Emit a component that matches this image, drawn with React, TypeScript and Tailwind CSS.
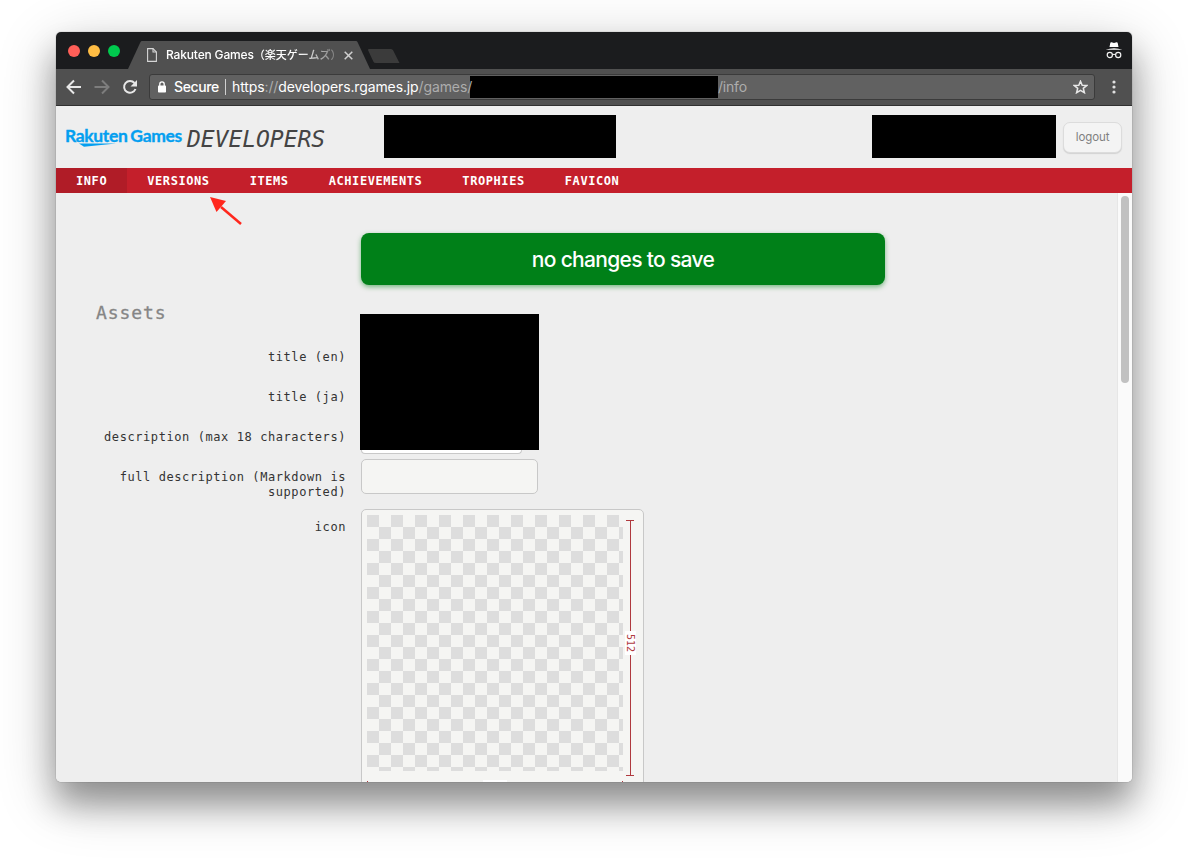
import React from "react";

const mono = "font-['DejaVu_Sans_Mono',monospace]";

const tabs = ["INFO", "VERSIONS", "ITEMS", "ACHIEVEMENTS", "TROPHIES", "FAVICON"];

function TabStrip() {
  return (
    <div className="relative flex h-[37px] shrink-0 bg-[#1b1c1e]">
      <div className="flex w-[72px] items-center gap-2 pl-3">
        <i className="size-3 rounded-full bg-[#ff5f58]" />
        <i className="size-3 rounded-full bg-[#ffbd44]" />
        <i className="size-3 rounded-full bg-[#00ca4e]" />
      </div>
      <svg className="absolute left-[72px] top-0" width="275" height="37" viewBox="0 0 275 37">
        <path d="M0 37L12.5 10Q13 9 14 9H228Q229 9 229.5 10L242 37Z" fill="#505050" />
        <path d="M240.500 17H263Q264.500 17 265.200 18.500L271.500 31H248Q246 31 245.300 29.500L240 18Z" fill="#3b3b3b" />
      </svg>
      <div className="relative flex w-[232px] items-center pt-[9px] pl-[19px]">
        <svg width="10" height="14" viewBox="0 0 10 14" fill="none" stroke="#d6d6d6" strokeWidth="1.100">
          <path d="M.6.6H6L9.400 4V13.400H.6Z" />
          <path d="M6 .6V4H9.400" />
        </svg>
        <span className="ml-[9px] w-[177px] shrink-0 whitespace-nowrap font-[Inter,'Noto_Sans_CJK_JP',sans-serif] text-[12px] font-medium leading-4 tracking-[-0.160px] text-white [mask-image:linear-gradient(to_right,#000_132px,rgba(0,0,0,0.25)_170px,transparent_176px)]">
          Rakuten Games<span className="text-[11px] tracking-normal">（楽天ゲームズ）</span>
        </span>
        <svg className="ml-[1px] shrink-0" width="9" height="9" viewBox="0 0 9 9" stroke="#d0d0d0" strokeWidth="1.500">
          <path d="M.7.7L8.300 8.300M8.300.7L.7 8.300" />
        </svg>
      </div>
      <svg className="ml-auto mr-[9px] mt-[10px]" width="18" height="17" viewBox="0 0 18 17">
        <path d="M5.300 1Q5.500 0 6.500.2L9 1L11.500.2Q12.500 0 12.700 1L13.500 5H4.500Z" fill="#fff" />
        <path d="M.5 7.800Q9 4.800 17.500 7.800Z" fill="#fff" />
        <g fill="none" stroke="#f2f2f2" strokeWidth="1.200">
          <circle cx="4.800" cy="13" r="2.600" />
          <circle cx="13.200" cy="13" r="2.600" />
          <path d="M7.400 12.800Q9 11.700 10.600 12.800" />
        </g>
      </svg>
    </div>
  );
}

function Toolbar() {
  return (
    <div className="flex h-[37px] shrink-0 items-center border-b border-[#303030] bg-[#505050] pl-[10px]">
      <svg width="74" height="16" viewBox="0 0 74 16" fill="none" strokeWidth="2">
        <path d="M15 8H2M8 1.500L1.500 8L8 14.500" stroke="#e8e8e8" />
        <path d="M28.500 8H42M36 1.500L42.500 8L36 14.500" stroke="#7d7d7d" />
        <path d="M68.500 4A5.900 5.900 0 1 0 69.500 10" stroke="#e8e8e8" />
        <path d="M71 1V7.500H64.500Z" fill="#e8e8e8" />
      </svg>
      <div className="ml-[9px] flex h-[26px] w-[946px] items-center rounded-[3px] border border-[#3b3b3b] bg-[#616161] pl-2 font-[Inter,sans-serif] text-[14px]">
        <svg width="8" height="12" viewBox="0 0 8 12">
          <rect y="4.500" width="8" height="7" rx=".8" fill="#fff" />
          <path d="M1.800 5V3A2.200 2.200 0 0 1 6.200 3V5" fill="none" stroke="#fff" strokeWidth="1.300" />
        </svg>
        <span className="ml-[8px] w-[51px] -translate-y-px whitespace-nowrap font-medium tracking-[-0.400px] text-white">Secure</span>
        <i className="h-4 w-px bg-[#d0d0d0]" />
        <span className="ml-[6px] w-[238px] -translate-y-px whitespace-nowrap tracking-[-0.120px] text-[#adadad]">
          <span className="text-white">https</span>://<span className="text-white">developers.rgames.jp</span>/games/
        </span>
        <i className="h-[22px] w-[248px] shrink-0 bg-black" />
        <span className="-translate-y-px tracking-[-0.200px] text-[#adadad]">/info</span>
        <svg className="ml-auto mr-[6px]" width="15" height="14" viewBox="0 0 15 14" fill="none" stroke="#e8e8e8" strokeWidth="1.500">
          <path d="M7.500 1.200L9.200 5.200L13.700 5.500L10.300 8.300L11.400 12.700L7.500 10.300L3.600 12.700L4.700 8.300L1.300 5.500L5.800 5.200Z" />
        </svg>
      </div>
      <svg className="ml-[17px]" width="4" height="14" viewBox="0 0 4 14" fill="#e0e0e0">
        <circle cx="2" cy="2" r="1.600" />
        <circle cx="2" cy="7" r="1.600" />
        <circle cx="2" cy="12" r="1.600" />
      </svg>
    </div>
  );
}

function SiteHeader() {
  return (
    <header className="flex h-[62px] shrink-0 items-start">
      <div className="ml-[9px] mt-[18px] w-[122px] shrink-0">
        <div className="whitespace-nowrap font-[Lato,sans-serif] text-[17.500px] font-bold leading-[23px] tracking-[-0.350px] text-[#049ff0] [-webkit-text-stroke:0.350px_#049ff0] [word-spacing:-1px]">
          Rakuten Games
        </div>
        <svg className="-mt-[4px] ml-[14px] block" width="38" height="4" viewBox="0 0 38 4">
          <path d="M0 .5H37L5 3.800Z" fill="#049ff0" />
        </svg>
      </div>
      <div className={`${mono} mt-[19px] w-[197px] shrink-0 text-[23px] italic leading-[28px] tracking-[-0.040px] text-[#444]`}>
        DEVELOPERS
      </div>
      <div className="mt-[9px] h-[43px] w-[232px] bg-black" />
      <div className="ml-auto mt-[9px] h-[43px] w-[184px] bg-black" />
      <button className="ml-[7px] mr-[10px] mt-4 h-[31px] w-[59px] rounded-[7px] border border-[#dcdcdc] bg-[#f4f4f4] font-[Inter,sans-serif] text-[11.500px] tracking-[-0.100px] text-[#808080] shadow-[0_1px_1px_#d2d2d2]">
        logout
      </button>
    </header>
  );
}

function Label({ children, height }: { children: React.ReactNode; height: string }) {
  return (
    <div className={`${mono} ${height} w-[290px] text-right text-[12px] leading-[15px] tracking-[0.580px] text-[#333]`}>
      {children}
    </div>
  );
}

export default function App() {
  return (
    <div className="h-[862px] overflow-hidden bg-white pl-14 pt-8">
      <div className="relative flex h-[750px] w-[1076px] flex-col rounded-[5px] shadow-[0_0_1px_rgba(0,0,0,0.6),0_22px_32px_rgba(0,0,0,0.32),0_16px_60px_rgba(0,0,0,0.24)]">
        <div className="flex h-full flex-col overflow-hidden rounded-[5px] bg-[#eeeeee]">
          <TabStrip />
          <Toolbar />
          <SiteHeader />
          <nav className="flex h-[25px] shrink-0 bg-[#c41f2b]">
            {tabs.map((t, i) => (
              <a
                key={t}
                className={`${mono} px-5 pt-px text-[12px] font-bold leading-[25px] tracking-[0.580px] text-white ${i === 0 ? "bg-[#b01c27]" : ""}`}
              >
                {t}
              </a>
            ))}
          </nav>
          <main className="flex min-h-0 flex-1">
            <div className="flex-1">
              <div className="ml-[305px] mt-10 h-[52px] w-[524px] rounded-lg bg-[#008018] text-center font-[Inter,sans-serif] text-[21px] font-medium leading-[53px] tracking-[-0.680px] text-white shadow-[0_2px_5px_rgba(0,128,24,0.5)]">
                no changes to save
              </div>
              <h2 className={`${mono} ml-10 mt-[16px] h-[13px] text-[18px] leading-6 tracking-[0.900px] text-[#858585] [-webkit-text-stroke:0.300px_#858585]`}>
                Assets
              </h2>
              <div className="flex">
                <div className="flex flex-col pt-[36px]">
                  <Label height="h-10">title (en)</Label>
                  <Label height="h-10">title (ja)</Label>
                  <Label height="h-10">description (max 18 characters)</Label>
                  <Label height="h-[50px]">full description (Markdown is supported)</Label>
                  <Label height="h-10">icon</Label>
                </div>
                <div className="ml-[14px] w-[290px]">
                  <div className="h-[136px] w-[179px] bg-black" />
                  <div className="ml-px h-[4px] w-[161px] rounded-b-[5px] border border-t-0 border-[#c8c8c8] bg-white" />
                  <div className="ml-px mt-[5px] h-[35px] w-[177px] rounded-[5px] border border-[#c8c8c8] bg-[#f5f5f3]" />
                  <div className="ml-px mt-[15px] h-[300px] w-[283px] rounded-[5px] border border-[#c8c8c8] bg-[#f5f5f3] pl-[5px] pt-[5px]">
                    <div className="flex h-[262px]">
                      <div className="h-64 w-64 bg-[repeating-conic-gradient(#f5f5f3_0%_25%,#dddddd_0%_50%)] bg-[length:24px_24px]" />
                      <div className="ml-[3px] mt-[5px] flex h-[256px] w-2 flex-col items-center text-[#b03a3f]">
                        <i className="h-px w-2 shrink-0 bg-current" />
                        <i className="h-[110px] w-px shrink-0 bg-current" />
                        <span className={`${mono} flex h-[24px] w-[11px] shrink-0 items-center justify-center bg-white text-[10px] leading-[11px] [writing-mode:vertical-rl]`}>
                          512
                        </span>
                        <i className="w-px flex-1 bg-current" />
                        <i className="h-px w-2 shrink-0 bg-current" />
                      </div>
                    </div>
                    <div className="mt-[3px] flex h-2 w-64 items-start justify-between">
                      <i className="mt-px h-2 w-px bg-[#b03a3f]" />
                      <i className="h-2 w-6 bg-white" />
                      <i className="mt-px h-2 w-px bg-[#b03a3f]" />
                    </div>
                  </div>
                </div>
              </div>
            </div>
            <div className="w-[15px] border-l border-[#e6e6e6] bg-[#fafafa] pl-[3px] pt-[3px]">
              <div className="h-[187px] w-2 rounded-full bg-[#c1c1c1]" />
            </div>
          </main>
        </div>
        <svg className="absolute left-[153px] top-[164px]" width="36" height="32" viewBox="0 0 36 32">
          <path d="M12 11L32 28" stroke="#ff271d" strokeWidth="2.500" />
          <path d="M1 1L17 5L7.500 16Z" fill="#ff271d" />
        </svg>
      </div>
    </div>
  );
}
